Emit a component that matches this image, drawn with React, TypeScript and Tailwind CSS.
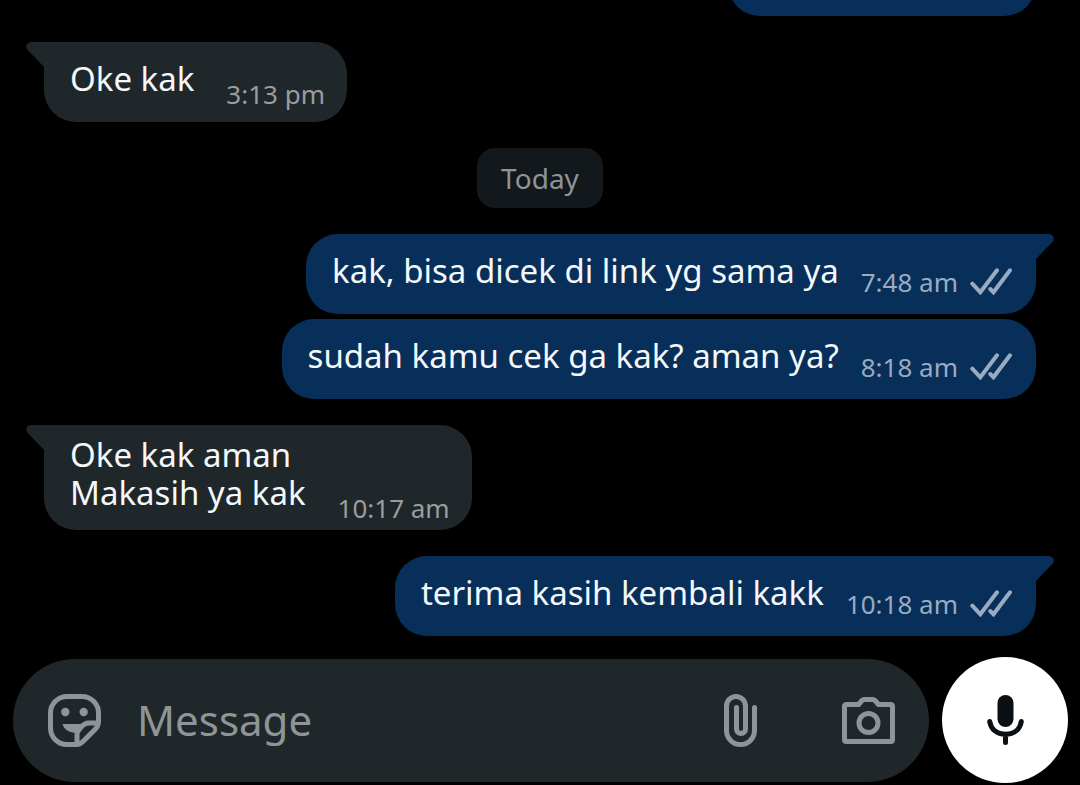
import clsx from "clsx";

interface Message {
  id: number;
  lines: string[];
  time: string;
  outgoing: boolean;
  tail: boolean;
}

const yesterday: Message[] = [
  { id: 1, lines: ["Oke kak"], time: "3:13 pm", outgoing: false, tail: true },
];

const today: Message[] = [
  { id: 2, lines: ["kak, bisa dicek di link yg sama ya"], time: "7:48 am", outgoing: true, tail: true },
  { id: 3, lines: ["sudah kamu cek ga kak? aman ya?"], time: "8:18 am", outgoing: true, tail: false },
  { id: 4, lines: ["Oke kak aman", "Makasih ya kak"], time: "10:17 am", outgoing: false, tail: true },
  { id: 5, lines: ["terima kasih kembali kakk"], time: "10:18 am", outgoing: true, tail: true },
];

function Tail({ outgoing }: { outgoing: boolean }) {
  return (
    <svg
      viewBox="0 0 19 25"
      aria-hidden="true"
      className={clsx(
        "absolute top-0 h-[25px] w-[19px]",
        outgoing ? "-right-[18px] -scale-x-100 fill-[#082f59]" : "-left-[18px] fill-[#20272a]"
      )}
    >
      <path d="M19 0H5.500C.8 0-1.200 4.600 1.500 7.800L18 25h1z" />
    </svg>
  );
}

function Ticks() {
  return (
    <svg
      viewBox="0 0 42 27"
      role="img"
      aria-label="Delivered"
      className="mb-[13px] ml-3 h-[27px] w-[42px] shrink-0 fill-none stroke-[#9aabc1] stroke-4"
      strokeLinecap="round"
    >
      <path d="M2.300 15.700L10.300 24.300L27 2.300" />
      <path d="M20.300 21L23.500 24.300L40 2.300" />
    </svg>
  );
}

function Bubble({ message }: { message: Message }) {
  const { lines, time, outgoing, tail } = message;

  return (
    <div
      className={clsx(
        "relative flex min-h-20 shrink-0 items-center rounded-[32px] pl-[26px]",
        outgoing ? "self-end bg-[#082f59] pr-6" : "self-start bg-[#20272a] pr-[22px]",
        tail && (outgoing ? "rounded-tr-none" : "rounded-tl-none")
      )}
    >
      {tail && <Tail outgoing={outgoing} />}
      <div className="flex items-end">
        <div className="pt-[11px] pb-[18px] text-[33px] leading-[38px] text-[#f4f8fa]">
          {lines.map((line) => (
            <p key={line}>{line}</p>
          ))}
        </div>
        <time
          className={clsx(
            "text-[26px] leading-9 whitespace-nowrap",
            outgoing ? "ml-[22px] pb-2 text-[#9aabc1]" : "ml-8 pb-1 text-[#999da0]"
          )}
        >
          {time}
        </time>
        {outgoing && <Ticks />}
      </div>
    </div>
  );
}

function StickerIcon() {
  return (
    <svg viewBox="0 0 53 53" className="size-[53px] fill-none stroke-[#8d9598] stroke-5" aria-hidden="true">
      <path d="M29 50.500H19A16.500 16.500 0 0 1 2.500 34V19A16.500 16.500 0 0 1 19 2.500H34A16.500 16.500 0 0 1 50.500 19V27.500C50.500 31 49 33.500 47 35.500L35.500 47C33.500 49 31.500 50.500 29 50.500Z" />
      <path d="M50 29H41C36 29 34 32 32 34.500C30 36.500 29 38 29 41V50" />
      <path d="M14.500 30H38L29 39C21 38.500 16 36 14.500 30Z" className="fill-[#8d9598] stroke-none" />
      <circle cx="17.300" cy="18" r="4.200" className="fill-[#8d9598] stroke-none" />
      <circle cx="35.700" cy="18" r="4.200" className="fill-[#8d9598] stroke-none" />
    </svg>
  );
}

function ClipIcon() {
  return (
    <svg viewBox="0 0 33 53" className="h-[53px] w-[33px] fill-none stroke-[#8d9598] stroke-5" strokeLinecap="round" aria-hidden="true">
      <path d="M30.500 13.500V36.500A14 14 0 0 1 2.500 36.500V12A9.500 9.500 0 0 1 21.500 12V35A4.500 4.500 0 0 1 12.500 35V13.500" />
    </svg>
  );
}

function CameraIcon() {
  return (
    <svg viewBox="0 0 53 47" className="h-[47px] w-[53px] fill-none stroke-[#8d9598] stroke-5" strokeLinejoin="round" aria-hidden="true">
      <path d="M4.500 7.500H16.500L20 3.500Q21 2.500 22 2.500H31Q32 2.500 33 3.500L36.500 7.500H48.500Q50.500 7.500 50.500 9.500V42.500Q50.500 44.500 48.500 44.500H4.500Q2.500 44.500 2.500 42.500V9.500Q2.500 7.500 4.500 7.500Z" />
      <circle cx="26.500" cy="26" r="9.500" />
    </svg>
  );
}

function MicIcon() {
  return (
    <svg viewBox="0 0 37 50" className="h-[50px] w-[37px]" aria-hidden="true">
      <rect x="10.500" y="0" width="16" height="32" rx="8" className="fill-[#0b1014]" />
      <path
        d="M2.700 26.500C4 34.500 10 39.300 18.500 39.300S33 34.500 34.300 26.500M18.500 39.500V47.500"
        className="fill-none stroke-[#0b1014] stroke-5"
        strokeLinecap="round"
      />
    </svg>
  );
}

export default function App() {
  return (
    <div className="flex h-screen flex-col overflow-hidden bg-black font-['Noto_Sans',sans-serif]">
      <main className="flex min-h-0 flex-1 flex-col justify-end gap-[26px] overflow-hidden px-11">
        <div className="h-20 w-[308px] shrink-0 self-end rounded-[32px] bg-[#082f59]" />
        {yesterday.map((message) => (
          <Bubble key={message.id} message={message} />
        ))}
        <div className="shrink-0 self-center rounded-[18px] bg-[#12181b] px-6 py-3 text-[28px] leading-9 text-[#8d9598]">
          Today
        </div>
        <div className="flex shrink-0 flex-col gap-[5px]">
          {today.slice(0, 2).map((message) => (
            <Bubble key={message.id} message={message} />
          ))}
        </div>
        {today.slice(2).map((message) => (
          <Bubble key={message.id} message={message} />
        ))}
      </main>

      <form className="flex shrink-0 items-center gap-[13px] pt-[21px] pr-3 pb-[2px] pl-[13px]">
        <div className="flex h-[123px] min-w-0 flex-1 items-center rounded-full bg-[#20272a] pr-[34px] pl-[35px]">
          <button type="button" aria-label="Stickers" className="shrink-0">
            <StickerIcon />
          </button>
          <input
            type="text"
            aria-label="Message"
            placeholder="Message"
            className="ml-9 h-16 min-w-0 flex-1 bg-transparent pb-[2px] text-[42px] text-white outline-none placeholder:text-[#8d9598]"
          />
          <button type="button" aria-label="Attach" className="shrink-0">
            <ClipIcon />
          </button>
          <button type="button" aria-label="Camera" className="ml-[85px] shrink-0">
            <CameraIcon />
          </button>
        </div>
        <button
          type="button"
          aria-label="Record voice message"
          className="flex size-[126px] shrink-0 items-center justify-center rounded-full bg-white"
        >
          <MicIcon />
        </button>
      </form>
    </div>
  );
}
